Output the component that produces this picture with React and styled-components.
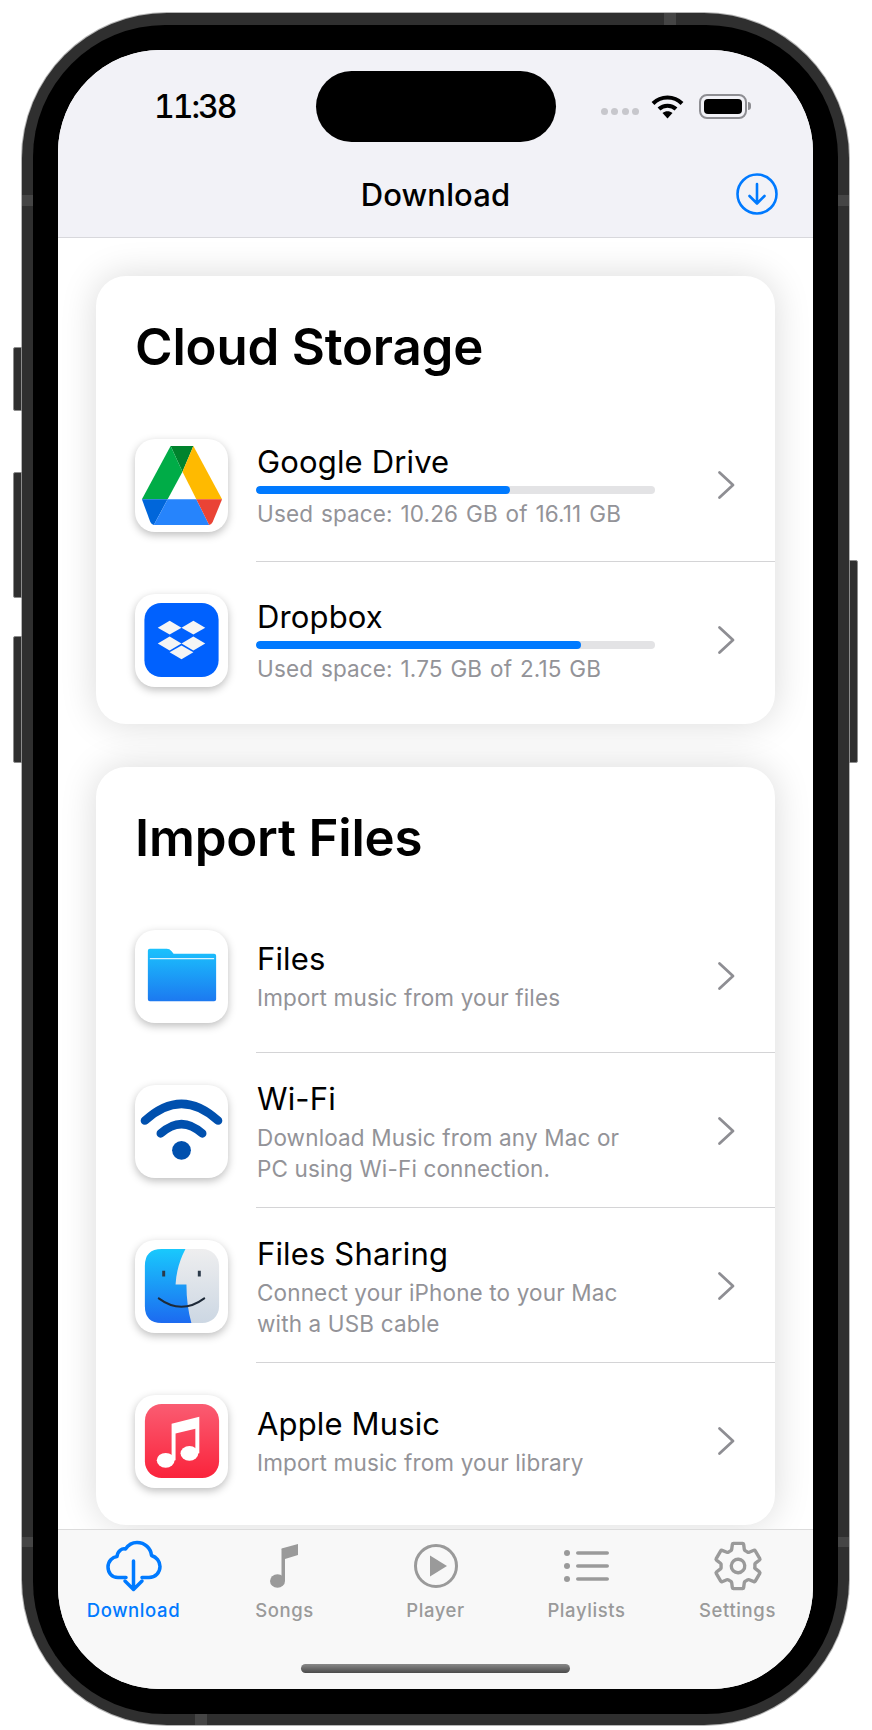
import React from "react";
import styled, { createGlobalStyle } from "styled-components";
import { IoSettingsOutline } from "react-icons/io5";

const GlobalStyle = createGlobalStyle`
  html, body {
    margin: 0;
    padding: 0;
    background: #fff;
    font-family: Inter, "Liberation Sans", sans-serif;
  }
  * { box-sizing: border-box; }
`;

const Stage = styled.div`
  width: 872px;
  height: 1730px;
  padding: 13px 23px 5px 22px;
  overflow: hidden;
`;

const Phone = styled.div`
  position: relative;
  width: 827px;
  height: 1712px;
  padding: 12px 11px 11px;
  background: #2f2f2f;
  border-radius: 145px;
  box-shadow: 0 0 0 1px #b5b5b5;
`;

const SideButton = styled.div`
  position: absolute;
  top: ${(p) => p.$top}px;
  height: ${(p) => p.$height}px;
  width: 9px;
  background: #2f2f2f;
  border: 1px solid #8c8c8c;
  ${(p) => (p.$right ? "right: -9px; border-radius: 0 2px 2px 0;" : "left: -9px; border-radius: 2px 0 0 2px;")}
`;

const AntennaBand = styled.i`
  position: absolute;
  background: #454545;
  ${(p) => p.$at}
`;

const Bezel = styled.div`
  height: 100%;
  padding: 25px;
  background: #000;
  border-radius: 132px;
`;

const Screen = styled.div`
  position: relative;
  height: 100%;
  display: flex;
  flex-direction: column;
  background: #fff;
  border-radius: 102px;
  overflow: hidden;
`;

const Island = styled.div`
  position: absolute;
  top: 21px;
  left: 258px;
  width: 240px;
  height: 71px;
  background: #000;
  border-radius: 36px;
`;

const Header = styled.header`
  background: #f2f2f7;
  border-bottom: 1px solid #d8d8dc;
`;

const StatusBar = styled.div`
  height: 101px;
  padding: 12px 66px 0 96px;
  display: flex;
  align-items: center;
  justify-content: space-between;
`;

const Time = styled.span`
  font-size: 32px;
  font-weight: 500;
  font-variant-numeric: tabular-nums;
  letter-spacing: -2px;
  color: #000;
`;

const StatusIcons = styled.div`
  display: flex;
  align-items: center;
`;

const SignalDots = styled.div`
  display: flex;
  gap: 3.5px;
  margin: 9px 12px 0 0;
`;

const SignalDot = styled.i`
  display: block;
  width: 7px;
  height: 7px;
  border-radius: 50%;
  background: #c7c7cc;
`;

const Battery = styled.div`
  position: relative;
  width: 48px;
  height: 25px;
  margin-left: 15px;
  padding: 3px;
  border: 2px solid #8e8e93;
  border-radius: 8px;
  &::before {
    content: "";
    display: block;
    height: 100%;
    background: #000;
    border-radius: 4px;
  }
  &::after {
    content: "";
    position: absolute;
    right: -6px;
    top: 6px;
    width: 3px;
    height: 8px;
    background: #8e8e93;
    border-radius: 0 3px 3px 0;
  }
`;

const NavBar = styled.div`
  height: 86px;
  display: grid;
  grid-template-columns: 1fr auto 1fr;
  align-items: center;
`;

const NavTitle = styled.h1`
  grid-column: 2;
  margin: 0;
  font-size: 31px;
  font-weight: 500;
  letter-spacing: 0.15px;
  color: #000;
`;

const NavAction = styled.div`
  display: flex;
  justify-content: flex-end;
  padding-right: 35px;
`;

const Content = styled.main`
  flex: 1;
  min-height: 0;
  padding: 38px 38px 0 38px;
  display: flex;
  flex-direction: column;
  gap: 43px;
  background: #fff;
`;

const Card = styled.section`
  padding-bottom: 7px;
  background: #fff;
  border-radius: 30px;
  box-shadow: 0 0 36px rgba(0, 0, 0, 0.15);
`;

const CardTitle = styled.h2`
  margin: 0;
  height: 131px;
  padding: 40px 0 0 39px;
  font-size: 51px;
  line-height: 62px;
  font-weight: 600;
  letter-spacing: -0.2px;
  color: #000;
`;

const Row = styled.div`
  height: 155px;
  padding-left: 38px;
  display: flex;
  align-items: center;
  gap: 28px;
`;

const Tile = styled.div`
  flex: none;
  width: 93px;
  height: 93px;
  margin: 1px 0 0 1px;
  background: #fff;
  border-radius: 20px;
  box-shadow: 0 3px 8px rgba(0, 0, 0, 0.26);
  svg { display: block; }
`;

const RowBody = styled.div`
  flex: 1;
  align-self: stretch;
  display: flex;
  align-items: center;
  padding-left: 1px;
  border-bottom: ${(p) => (p.$last ? "1px solid transparent" : "1px solid #d4d4d6")};
`;

const RowText = styled.div`
  width: 398px;
  flex: none;
  padding-top: 3px;
`;

const RowTitle = styled.div`
  font-size: 31px;
  line-height: 38px;
  font-weight: 400;
  letter-spacing: 0.15px;
  color: #000;
`;

const RowSub = styled.div`
  margin-top: 4px;
  font-size: 22.5px;
  line-height: 31px;
  letter-spacing: 0.15px;
  word-spacing: ${(p) => (p.$metric ? "1.3px" : "0")};
  color: #939398;
  white-space: pre-line;
`;

const Track = styled.div`
  height: 8px;
  margin: 5px 0 0 -1px;
  background: #e3e3e5;
  border-radius: 4px;
  overflow: hidden;
`;

const Fill = styled.div`
  height: 100%;
  background: #007aff;
  border-radius: 4px;
`;

const ChevronWrap = styled.div`
  margin: 1px 0 0 62px;
  display: flex;
`;

const TabBar = styled.nav`
  height: 160px;
  flex: none;
  display: flex;
  flex-direction: column;
  background: #f8f8f8;
  border-top: 1px solid #dcdcdc;
`;

const TabRow = styled.div`
  display: grid;
  grid-template-columns: repeat(5, 1fr);
  padding-top: 10px;
`;

const Tab = styled.div`
  display: flex;
  flex-direction: column;
  align-items: center;
  color: ${(p) => (p.$active ? "#007aff" : "#9a9a9a")};
`;

const TabIcon = styled.div`
  height: 52px;
  display: flex;
  align-items: center;
  justify-content: center;
`;

const TabLabel = styled.span`
  margin-top: 6px;
  font-size: 18.5px;
  line-height: 24px;
  font-weight: 500;
  letter-spacing: 0.6px;
`;

const HomeBar = styled.div`
  width: 269px;
  height: 9px;
  margin: auto auto 16px;
  background: linear-gradient(#8a8a8a, #4a4a4a);
  border-radius: 5px;
`;

const Chevron = () => (
  <svg width="19" height="30" viewBox="0 0 19 30" fill="none">
    <path d="M2.5 2.5 16 15 2.5 27.5" stroke="#8e8e93" strokeWidth="2.8" strokeLinecap="round" strokeLinejoin="round" />
  </svg>
);

const DriveIcon = () => (
  <svg width="93" height="93" viewBox="0 0 94 94">
    <path d="M36 7H59L48 33Z" fill="#00832d" />
    <path d="M36 7 48 33 33 61H7Z" fill="#00ac47" />
    <path d="M59 7 88 61H62L48 33Z" fill="#ffba00" />
    <path d="M7 61H33L19 87Q17 87 15.5 84Z" fill="#0066da" />
    <path d="M33 61H62L75 87H19Z" fill="#2684fc" />
    <path d="M62 61H88L78.5 84Q77 87 75 87Z" fill="#ea4335" />
  </svg>
);

const diamonds = [[35, 34], [59, 34], [35, 50], [59, 50], [47, 59]];

const DropboxIcon = () => (
  <svg width="93" height="93" viewBox="0 0 94 94">
    <rect x="9.5" y="9" width="75" height="75" rx="17" fill="#0061fe" />
    {diamonds.map(([x, y]) => (
      <path key={`${x}-${y}`} d={`M${x - 12} ${y}L${x} ${y - 7}L${x + 12} ${y}L${x} ${y + 7}Z`} fill="#f5f5f5" />
    ))}
  </svg>
);

const FilesIcon = () => (
  <svg width="93" height="93" viewBox="0 0 94 94">
    <defs>
      <linearGradient id="folder" x1="0" y1="0" x2="0" y2="1">
        <stop offset="0" stopColor="#1bc2fd" />
        <stop offset="1" stopColor="#1c79f0" />
      </linearGradient>
    </defs>
    <path
      d="M15 19H32Q35 19 37 21.5L39 24H80Q82 24 82 26V70Q82 72 80 72H15Q13 72 13 70V21Q13 19 15 19Z"
      fill="url(#folder)"
    />
    <path d="M15 29H80" stroke="#d8f2ff" strokeWidth="1.2" />
  </svg>
);

const WifiTileIcon = () => (
  <svg width="93" height="93" viewBox="0 0 94 94" fill="none">
    <path d="M10 36Q47 2 84 36" stroke="#0050ae" strokeWidth="8.5" strokeLinecap="round" />
    <path d="M26 49Q47 30 68 49" stroke="#0050ae" strokeWidth="8.5" strokeLinecap="round" />
    <circle cx="47" cy="66" r="9.5" fill="#0050ae" />
  </svg>
);

const FinderIcon = () => (
  <svg width="93" height="93" viewBox="0 0 94 94" fill="none">
    <defs>
      <linearGradient id="finderBlue" x1="0" y1="0" x2="0" y2="1">
        <stop offset="0" stopColor="#19c9fd" />
        <stop offset="1" stopColor="#1c6af0" />
      </linearGradient>
      <linearGradient id="finderGray" x1="0" y1="0" x2="0" y2="1">
        <stop offset="0" stopColor="#eeeeef" />
        <stop offset="1" stopColor="#ccd7e3" />
      </linearGradient>
    </defs>
    <rect x="10" y="9" width="75" height="75" rx="17" fill="url(#finderGray)" />
    <path
      d="M27 9H51Q42 26 41 45H52Q52 66 57 84H27Q10 84 10 67V26Q10 9 27 9Z"
      fill="url(#finderBlue)"
    />
    <path d="M29 31V37M65 31V37" stroke="#2b3a4a" strokeWidth="3" />
    <path d="M24 59Q47 76 70 59" stroke="#1e2a38" strokeWidth="2" strokeLinecap="round" />
  </svg>
);

const MusicIcon = () => (
  <svg width="93" height="93" viewBox="0 0 94 94">
    <defs>
      <linearGradient id="musicRed" x1="0" y1="0" x2="0" y2="1">
        <stop offset="0" stopColor="#fa5c72" />
        <stop offset="1" stopColor="#fa233b" />
      </linearGradient>
    </defs>
    <rect x="10" y="9" width="75" height="75" rx="17" fill="url(#musicRed)" />
    <path d="M37 29 65 22V59H61V34L41 39V66H37Z" fill="#fff" />
    <ellipse cx="31" cy="66" rx="9" ry="7.5" fill="#fff" />
    <ellipse cx="55" cy="59" rx="9" ry="7.5" fill="#fff" />
  </svg>
);

const CloudTab = () => (
  <svg width="56" height="52" viewBox="0 0 56 52" fill="none" stroke="currentColor" strokeWidth="3.5" strokeLinecap="round" strokeLinejoin="round">
    <path d="M20 37.5H12C5.5 37.5 2 32.5 2 27C2 21 6.5 17 11 16.5C11.5 11 16 8 19.5 9C22.5 4.5 26.5 2.5 31 2.5C39 2.5 45 8.5 45.5 15.5C50.5 17 54 21.5 54 26.5C54 32.5 49.5 37.5 43 37.5H36" />
    <path d="M27.5 21V49M19 41 27.5 49.5 36 41" />
  </svg>
);

const NoteTab = () => (
  <svg width="30" height="46" viewBox="0 0 30 46" fill="currentColor">
    <ellipse cx="7.5" cy="38" rx="7.5" ry="6.8" />
    <rect x="11.5" y="6" width="3.5" height="32" />
    <path d="M11.5 5.5 28 1V12L15 16Z" />
  </svg>
);

const PlayTab = () => (
  <svg width="46" height="46" viewBox="0 0 46 46" fill="none" stroke="currentColor">
    <circle cx="23" cy="23" r="20.5" strokeWidth="3" />
    <path d="M17 12.5V33.5L34 23Z" fill="currentColor" stroke="none" />
  </svg>
);

const ListTab = () => (
  <svg width="46" height="32" viewBox="0 0 46 32" fill="currentColor">
    {[3, 16, 29].map((y) => (
      <g key={y}>
        <circle cx="3" cy={y} r="3" />
        <rect x="12" y={y - 1.8} width="33" height="3.6" rx="1.8" />
      </g>
    ))}
  </svg>
);

const cloudRows = [
  { name: "Google Drive", icon: <DriveIcon />, used: 10.26 / 16.11, sub: "Used space: 10.26 GB of 16.11 GB" },
  { name: "Dropbox", icon: <DropboxIcon />, used: 1.75 / 2.15, sub: "Used space: 1.75 GB of 2.15 GB" },
];

const importRows = [
  { name: "Files", icon: <FilesIcon />, sub: "Import music from your files" },
  { name: "Wi-Fi", icon: <WifiTileIcon />, sub: "Download Music from any Mac or\nPC using Wi-Fi connection." },
  { name: "Files Sharing", icon: <FinderIcon />, sub: "Connect your iPhone to your Mac\nwith a USB cable" },
  { name: "Apple Music", icon: <MusicIcon />, sub: "Import music from your library" },
];

const tabs = [
  { label: "Download", icon: <CloudTab />, active: true },
  { label: "Songs", icon: <NoteTab /> },
  { label: "Player", icon: <PlayTab /> },
  { label: "Playlists", icon: <ListTab /> },
  { label: "Settings", icon: <IoSettingsOutline size={54} /> },
];

const bands = [
  "left: 0; top: 182px; width: 11px; height: 11px;",
  "right: 0; top: 182px; width: 11px; height: 11px;",
  "left: 0; top: 1524px; width: 11px; height: 10px;",
  "right: 0; top: 1524px; width: 11px; height: 10px;",
  "left: 642px; top: 0; width: 12px; height: 12px;",
  "left: 173px; bottom: 0; width: 12px; height: 11px;",
];

const ListRow = ({ item, last }) => (
  <Row>
    <Tile>{item.icon}</Tile>
    <RowBody $last={last}>
      <RowText>
        <RowTitle>{item.name}</RowTitle>
        {item.used !== undefined && (
          <Track>
            <Fill style={{ width: `${item.used * 100}%` }} />
          </Track>
        )}
        <RowSub $metric={item.used !== undefined}>{item.sub}</RowSub>
      </RowText>
      <ChevronWrap>
        <Chevron />
      </ChevronWrap>
    </RowBody>
  </Row>
);

export default function App() {
  return (
    <Stage>
      <GlobalStyle />
      <Phone>
        <SideButton $top={334} $height={64} />
        <SideButton $top={459} $height={126} />
        <SideButton $top={623} $height={127} />
        <SideButton $right $top={547} $height={203} />
        {bands.map((at) => (
          <AntennaBand key={at} $at={at} />
        ))}
        <Bezel>
          <Screen>
            <Island />
            <Header>
              <StatusBar>
                <Time>11:38</Time>
                <StatusIcons>
                  <SignalDots>
                    <SignalDot />
                    <SignalDot />
                    <SignalDot />
                    <SignalDot />
                  </SignalDots>
                  <svg width="33" height="25" viewBox="0 0 33 25" fill="none" stroke="#000" strokeWidth="4">
                    <path d="M2 9.5C10 1.5 23 1.5 31 9.5" />
                    <path d="M8 15C12.5 10.5 20.5 10.5 25 15" />
                    <path d="M11.5 19 16.5 24.5 21.5 19C18.5 16.5 14.5 16.5 11.5 19Z" fill="#000" stroke="none" />
                  </svg>
                  <Battery />
                </StatusIcons>
              </StatusBar>
              <NavBar>
                <NavTitle>Download</NavTitle>
                <NavAction>
                  <svg width="42" height="42" viewBox="0 0 42 42" fill="none" stroke="#007aff" strokeWidth="2.6" strokeLinecap="round" strokeLinejoin="round">
                    <circle cx="21" cy="21" r="19.5" />
                    <path d="M21 11V30M13.5 23 21 30.5 28.5 23" />
                  </svg>
                </NavAction>
              </NavBar>
            </Header>
            <Content>
              <Card>
                <CardTitle>Cloud Storage</CardTitle>
                {cloudRows.map((item, i) => (
                  <ListRow key={item.name} item={item} last={i === cloudRows.length - 1} />
                ))}
              </Card>
              <Card>
                <CardTitle>Import Files</CardTitle>
                {importRows.map((item, i) => (
                  <ListRow key={item.name} item={item} last={i === importRows.length - 1} />
                ))}
              </Card>
            </Content>
            <TabBar>
              <TabRow>
                {tabs.map((tab) => (
                  <Tab key={tab.label} $active={tab.active}>
                    <TabIcon>{tab.icon}</TabIcon>
                    <TabLabel>{tab.label}</TabLabel>
                  </Tab>
                ))}
              </TabRow>
              <HomeBar />
            </TabBar>
          </Screen>
        </Bezel>
      </Phone>
    </Stage>
  );
}
